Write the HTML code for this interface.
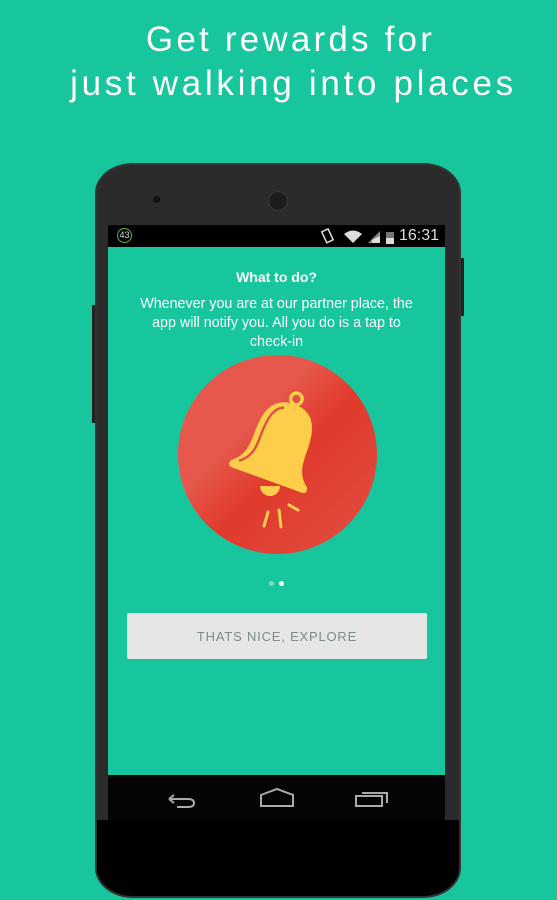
<!DOCTYPE html>
<html><head><style>
body{margin:0;width:557px;height:900px;background:#18c69d;position:relative;overflow:hidden;font-family:"Liberation Sans",sans-serif}
.h{position:absolute;left:15px;width:557px;text-align:center;color:#fff;font-size:35px;letter-spacing:3.6px}
.phone{position:absolute;left:95px;top:163px;width:366px;height:735px;background:linear-gradient(#2b2b2b 0,#2b2b2b 655px,#000 655px);border-radius:38px/30px;border:2px solid #333;box-sizing:border-box;overflow:hidden}
.screen{position:absolute;left:108px;top:225px;width:337px;height:550px;background:#18c69d}
.sb{position:absolute;left:0;top:0;width:100%;height:22px;background:#000;color:#ddd;font-size:14px}
.btn{position:absolute;left:19px;top:388px;width:300px;height:46px;background:#e6e6e6;border-radius:2px;color:#7d8b8b;font-size:13px;text-align:center;line-height:48px;letter-spacing:.8px}
</style></head><body>
<div class="h" style="top:20px;letter-spacing:3.2px;left:12px">Get rewards for</div>
<div class="h" style="top:64px;letter-spacing:3.7px">just walking into places</div>
<div style="position:absolute;left:459px;top:258px;width:5px;height:58px;background:#222"></div>
<div style="position:absolute;left:92px;top:305px;width:4px;height:118px;background:#222"></div>
<div class="phone">
<div style="position:absolute;left:56px;top:31px;width:7px;height:7px;border-radius:50%;background:#111"></div>
<div style="position:absolute;left:171px;top:26px;width:18px;height:18px;border-radius:50%;background:#1c1c1c;border:1px solid #3a3a3a"></div>
</div>
<div class="screen">
<div class="sb">
<div style="position:absolute;left:9px;top:3px;width:13px;height:13px;border:1.5px solid #6b2;border-radius:50%;font-size:9px;color:#ddd;text-align:center;line-height:13px">43</div>
<svg style="position:absolute;left:212px;top:3px" width="100" height="17" viewBox="0 0 100 17">
<rect x="4" y="2" width="7" height="12" transform="rotate(-25 7 8)" fill="none" stroke="#ddd" stroke-width="1.5"/>
<path d="M24 6 Q33 -1 42 6 L33 15Z" fill="#ddd"/>
<path d="M48 15 L60 15 L60 3Z" fill="#888"/><path d="M52 15 L60 15 L60 8 L52 12Z" fill="#ddd"/>
<rect x="66" y="4" width="8" height="12" fill="#ddd"/><rect x="66" y="4" width="8" height="6" fill="#777"/>
</svg>
<div style="position:absolute;right:6px;top:2px;font-size:16px">16:31</div>
</div>
<div style="position:absolute;top:44px;width:100%;text-align:center;color:#fff;font-weight:bold;font-size:14px">What to do?</div>
<div style="position:absolute;top:70px;left:24px;width:289px;text-align:center;color:#fff;font-size:14.3px;line-height:19px">Whenever you are at our partner place, the app will notify you. All you do is a tap to check-in</div>
<div style="position:absolute;left:70px;top:130px;width:199px;height:199px;border-radius:50%;background:linear-gradient(135deg,#e7584c 0%,#e7584c 35%,#e03a2c 55%,#e05045 100%)"></div>
<svg style="position:absolute;left:0;top:0" width="337" height="550" viewBox="108 225 337 550">
<path d="M260 486 A10 10 0 0 0 280 486Z" fill="#fece4a"/>
<g transform="translate(280 444) rotate(20) scale(0.96)">
<circle cx="0" cy="-50" r="6" fill="none" stroke="#fece4a" stroke-width="3.5"/>
<path d="M0 -44 C-27 -44 -29 -20 -29 0 C-29 18 -33 26 -42 33 Q-45 40 -38 40 L38 40 Q45 40 42 33 C33 26 29 18 29 0 C29 -20 27 -44 0 -44Z" fill="#fece4a"/>
<path d="M-9 -37 C-21 -33 -22 -15 -22 2 C-22 17 -26 25 -34 31" fill="none" stroke="#e05045" stroke-width="2.5"/>
</g>
<path d="M268 512 L264 526 M279 510 L281 527 M289 505 L298 510" stroke="#fece4a" stroke-width="3" stroke-linecap="round"/>
</svg>
<div style="position:absolute;left:161px;top:356px;width:5px;height:5px;border-radius:50%;background:#7fdcc4"></div>
<div style="position:absolute;left:171px;top:356px;width:5px;height:5px;border-radius:50%;background:#fff"></div>
<div class="btn">THATS NICE, EXPLORE</div>
</div>
<svg style="position:absolute;left:108px;top:775px" width="337" height="45" viewBox="0 0 337 45">
<rect width="337" height="45" fill="#050505"/>
<path d="M61 24 L80 24 Q86 24 86 28 Q86 32 80 32 L69 32 M61 24 L66 20 M61 24 L66 28" stroke="#aaa" stroke-width="2" fill="none"/>
<path d="M153 20 L169 14 L185 20 L185 31 L153 31Z" stroke="#aaa" stroke-width="2" fill="none"/>
<rect x="248" y="21" width="26" height="10" stroke="#aaa" stroke-width="2" fill="none"/>
<path d="M254 18 L279 18 L279 28" stroke="#aaa" stroke-width="2" fill="none"/>
</svg>
</body></html>
